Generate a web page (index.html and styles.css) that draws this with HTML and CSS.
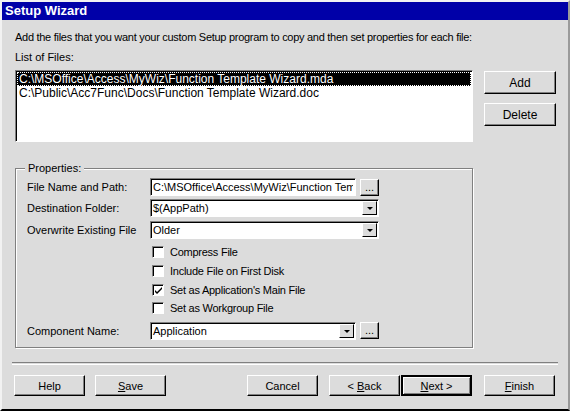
FILE: index.html
```html
<!DOCTYPE html>
<html>
<head>
<meta charset="utf-8">
<link rel="stylesheet" href="styles.css">
</head>
<body>
<div class="window">
  <div class="titlebar">Setup Wizard</div>
  <div class="content">
    <p class="intro">Add the files that you want your custom Setup program to copy and then set properties for each file:</p>
    <p class="list-label">List of Files:</p>
    <div class="list-row">
      <div class="listbox">
        <div class="item selected">C:\MSOffice\Access\MyWiz\Function Template Wizard.mda</div>
        <div class="item">C:\Public\Acc7Func\Docs\Function Template Wizard.doc</div>
      </div>
      <div class="side-buttons">
        <div class="btn side">Add</div>
        <div class="btn side">Delete</div>
      </div>
    </div>
    <div class="group">
      <span class="group-label">Properties:</span>
      <div class="row r1">
        <span class="label">File Name and Path:</span>
        <div class="textbox short"><input class="field" type="text" readonly value="C:\MSOffice\Access\MyWiz\Function Template Wizard.mda"></div>
        <div class="btn dots">...</div>
      </div>
      <div class="row r2">
        <span class="label">Destination Folder:</span>
        <div class="combo wide"><span class="val">$(AppPath)</span><span class="arrow"></span></div>
      </div>
      <div class="row r3">
        <span class="label">Overwrite Existing File</span>
        <div class="combo wide"><span class="val">Older</span><span class="arrow"></span></div>
      </div>
      <div class="checks">
        <div class="check"><span class="box"></span><span>Compress File</span></div>
        <div class="check"><span class="box"></span><span>Include File on First Disk</span></div>
        <div class="check"><span class="box checked"><svg width="9" height="9" viewBox="0 0 9 9"><path d="M1 4 L3 6 L8 1 L8 3 L3 8 L1 6 Z" fill="#000"/></svg></span><span>Set as Application's Main File</span></div>
        <div class="check"><span class="box"></span><span>Set as Workgroup File</span></div>
      </div>
      <div class="row r4">
        <span class="label">Component Name:</span>
        <div class="combo short"><span class="val">Application</span><span class="arrow"></span></div>
        <div class="btn dots">...</div>
      </div>
    </div>
  </div>
  <div class="separator"></div>
  <div class="bottom">
    <div class="btn b-help">Help</div>
    <div class="btn b-save"><span><u>S</u>ave</span></div>
    <div class="btn b-cancel">Cancel</div>
    <div class="btn b-back"><span>&lt; <u>B</u>ack</span></div>
    <div class="btn b-next default"><span><u>N</u>ext &gt;</span></div>
    <div class="btn b-finish"><span><u>F</u>inish</span></div>
  </div>
</div>
</body>
</html>
```

FILE: styles.css
```css
html, body {
  margin: 0;
  padding: 0;
  background: #dcdcdc;
}
body {
  font-family: "Liberation Sans", Arial, sans-serif;
  font-size: 11px;
  color: #000;
}
.window {
  width: 570px;
  height: 411px;
  box-sizing: border-box;
  border-top: 2px solid #f2f2f2;
  border-left: 2px solid #f2f2f2;
  border-right: 2px solid #9a9a9a;
  border-bottom: 2px solid #000;
  background: #dcdcdc;
  overflow: hidden;
}
.titlebar {
  height: 18px;
  line-height: 18px;
  background: #0000a8;
  color: #fff;
  font-weight: bold;
  font-size: 13px;
  padding-left: 3px;
}
.content {
  padding-left: 13px;
}
.intro {
  margin: 11px 0 0 0;
  line-height: 13px;
  white-space: nowrap;
  letter-spacing: -0.28px;
}
.list-label {
  margin: 7px 0 0 0;
  line-height: 13px;
}
.list-row {
  display: flex;
  margin-top: 6px;
}
.listbox {
  width: 458px;
  height: 72px;
  box-sizing: border-box;
  background: #fff;
  border-top: 1px solid #808080;
  border-left: 1px solid #808080;
  border-right: 1px solid #fff;
  border-bottom: 1px solid #fff;
  box-shadow: inset 1px 1px 0 #000;
  padding: 1px 0 0 1px;
}
.item {
  height: 14px;
  line-height: 14px;
  padding-left: 2px;
  white-space: nowrap;
  box-sizing: border-box;
  font-size: 12px;
}
.item.selected {
  background: #000;
  color: #fff;
  outline: 1px dotted #fff;
  outline-offset: -1px;
  margin-right: 1px;
}
.side-buttons {
  display: flex;
  flex-direction: column;
  gap: 9px;
  margin-left: 11px;
  padding-top: 1px;
}
.btn {
  box-sizing: border-box;
  display: flex;
  align-items: center;
  justify-content: center;
  background: #dcdcdc;
  border-top: 1px solid #fff;
  border-left: 1px solid #fff;
  border-right: 1px solid #000;
  border-bottom: 1px solid #000;
  box-shadow: inset -1px -1px 0 #808080;
  white-space: pre;
}
.btn.side {
  width: 72px;
  height: 23px;
  font-size: 12px;
}
.group {
  position: relative;
  margin-top: 26px;
  width: 458px;
  height: 180px;
  box-sizing: border-box;
  border: 1px solid #808080;
  box-shadow: inset 1px 1px 0 #fff, 1px 1px 0 #fff;
  padding: 9px 0 0 11px;
}
.group-label {
  position: absolute;
  top: -7px;
  left: 9px;
  background: #dcdcdc;
  padding: 0 3px;
  line-height: 13px;
}
.row {
  display: flex;
  align-items: center;
  height: 18px;
}
.r2 { margin-top: 3px; }
.r3 { margin-top: 4px; }
.r4 { margin-top: 4px; }
.label {
  width: 123px;
  flex: none;
  white-space: nowrap;
}
.textbox, .combo {
  box-sizing: border-box;
  height: 18px;
  background: #fff;
  border-top: 1px solid #808080;
  border-left: 1px solid #808080;
  border-right: 1px solid #fff;
  border-bottom: 1px solid #fff;
  box-shadow: inset 1px 1px 0 #000;
  white-space: nowrap;
  overflow: hidden;
  line-height: 16px;
  padding-left: 2px;
}
.textbox.short { width: 206px; }
.field {
  display: block;
  width: 200px;
  height: 16px;
  margin: 0;
  padding: 0;
  border: none;
  outline: none;
  background: transparent;
  font-family: inherit;
  font-size: 11px;
  color: #000;
  line-height: 16px;
}
.combo {
  display: flex;
  justify-content: space-between;
  padding-right: 1px;
}
.combo.wide { width: 229px; }
.combo.short { width: 206px; }
.arrow {
  flex: none;
  width: 15px;
  height: 14px;
  margin-top: 1px;
  box-sizing: border-box;
  background: #dcdcdc;
  border-top: 1px solid #fff;
  border-left: 1px solid #fff;
  border-right: 1px solid #000;
  border-bottom: 1px solid #000;
  position: relative;
}
.arrow::after {
  content: "";
  position: absolute;
  left: 4px;
  top: 5px;
  border-left: 3px solid transparent;
  border-right: 3px solid transparent;
  border-top: 3px solid #000;
}
.btn.dots {
  width: 19px;
  height: 17px;
  margin-left: 4px;
  font-size: 11px;
  line-height: 10px;
  align-items: flex-start;
  padding-top: 2px;
}
.checks {
  margin-top: 4px;
  margin-left: 123px;
  letter-spacing: -0.25px;
}
.check {
  display: flex;
  align-items: center;
  height: 18.7px;
  white-space: nowrap;
}
.box {
  width: 12px;
  height: 12px;
  box-sizing: border-box;
  background: #fff;
  border-top: 1px solid #808080;
  border-left: 1px solid #808080;
  border-right: 1px solid #fff;
  border-bottom: 1px solid #fff;
  box-shadow: inset 1px 1px 0 #000;
  margin: 0 6px 0 2px;
  display: flex;
  align-items: center;
  justify-content: center;
  padding: 1px 0 0 1px;
}
.separator {
  margin: 14px 10px 0 10px;
  height: 1px;
  border-top: 1px solid #808080;
  border-bottom: 1px solid #fff;
}
.bottom {
  display: flex;
  margin-top: 10px;
  padding-left: 12px;
}
.bottom .btn {
  width: 71px;
  height: 21px;
  font-size: 11px;
}
.b-save { margin-left: 10px; }
.b-cancel { margin-left: 81px; }
.b-back { margin-left: 11px; }
.b-next { margin-left: 1px; }
.b-finish { margin-left: 12px; }
.btn.default {
  border: 2px solid #000;
  box-shadow: inset 1px 1px 0 #fff, inset -1px -1px 0 #808080;
}
```
